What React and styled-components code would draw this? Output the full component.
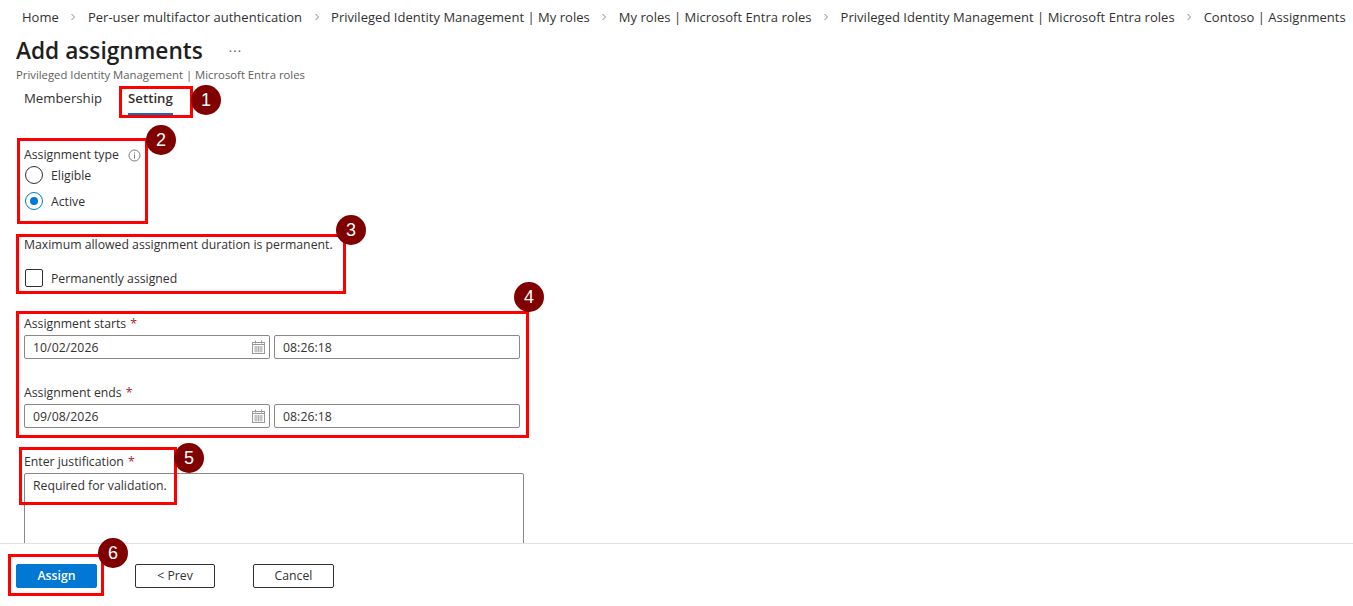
import React from "react";
import styled, { createGlobalStyle } from "styled-components";

const crumbs = [
  "Home",
  "Per-user multifactor authentication",
  "Privileged Identity Management | My roles",
  "My roles | Microsoft Entra roles",
  "Privileged Identity Management | Microsoft Entra roles",
  "Contoso | Assignments",
];

const Global = createGlobalStyle`
  html, body { margin: 0; padding: 0; background: #fff; overflow: hidden; }
  body { font-family: "Open Sans", "Noto Sans", "Liberation Sans", sans-serif; font-size: 12.25px; color: #323130; }
  * { box-sizing: border-box; }
`;

const Page = styled.div`
  width: 1353px;
  height: 606px;
  display: flex;
  flex-direction: column;
`;
const Content = styled.main`
  flex: 1;
  min-height: 0;
  overflow: hidden;
`;
const Crumbs = styled.nav`
  height: 34px;
  padding-left: 22px;
  display: flex;
  align-items: center;
  gap: 10.5px;
  white-space: nowrap;
  font-size: 13px;
  letter-spacing: 0.03px;
`;
const Chevron = styled.svg`
  width: 8px;
  height: 8px;
  flex: none;
  fill: none;
  stroke: #8a8886;
  stroke-width: 1;
`;
const TitleRow = styled.div`
  height: 34px;
  padding-left: 16px;
  display: flex;
  align-items: center;
  gap: 26px;
`;
const Title = styled.h1`
  margin: 0;
  font-size: 22.7px;
  line-height: 32px;
  font-weight: 600;
  color: #201f1e;
`;
const More = styled.span`
  font-size: 13px;
  color: #605e5c;
  letter-spacing: 1px;
  line-height: 1;
`;
const Subtitle = styled.div`
  height: 14px;
  line-height: 14px;
  padding-left: 16px;
  font-size: 11.3px;
  color: #605e5c;
`;
const Tabs = styled.div`
  height: 34px;
  padding-left: 24px;
  display: flex;
  gap: 26px;
  position: relative;
`;
const Tab = styled.div`
  height: 33px;
  padding-top: 7px;
  line-height: 18px;
  font-size: 13.2px;
  font-weight: ${(p) => (p.$active ? 600 : 400)};
  border-bottom: 2px solid ${(p) => (p.$active ? "#0f6cbd" : "transparent")};
`;
const Section = styled.section`
  position: relative;
  padding-left: 24px;
  margin-top: ${(p) => p.$top}px;
`;
const Label = styled.div`
  height: 16px;
  line-height: 16px;
  margin-top: ${(p) => p.$top || 0}px;
  display: flex;
  align-items: center;
  gap: 4px;
  white-space: nowrap;
`;
const Star = styled.span`
  color: #a4262c;
`;
const InfoIcon = styled.svg`
  width: 13px;
  height: 13px;
  margin-left: 5px;
  fill: none;
  stroke: #7a7876;
`;
const Choice = styled.label`
  height: 18px;
  margin: ${(p) => p.$top}px 0 0 1px;
  display: flex;
  align-items: center;
  gap: 8px;
`;
const Radio = styled.span`
  width: 18px;
  height: 18px;
  flex: none;
  border-radius: 50%;
  background: #fff;
  border: 1px solid ${(p) => (p.$on ? "#0078d4" : "#323130")};
  display: flex;
  align-items: center;
  justify-content: center;
  &::after {
    content: "";
    width: 8px;
    height: 8px;
    border-radius: 50%;
    background: ${(p) => (p.$on ? "#0078d4" : "transparent")};
  }
`;
const Check = styled.span`
  width: 18px;
  height: 18px;
  flex: none;
  border-radius: 2px;
  border: 1px solid #323130;
`;
const Fields = styled.div`
  display: flex;
  gap: 4px;
  margin-top: 3px;
`;
const Field = styled.div`
  width: 246px;
  height: 24px;
  padding: 0 4px 0 8px;
  border: 1px solid #8a8886;
  border-radius: 2px;
  display: flex;
  align-items: center;
  justify-content: space-between;
  letter-spacing: 0.05px;
`;
const Calendar = styled.svg`
  width: 13px;
  height: 14px;
  fill: none;
  stroke: #9a9896;
`;
const TextArea = styled.div`
  width: 500px;
  height: 110px;
  margin-top: 3px;
  padding: 4px 8px;
  line-height: 16px;
  border: 1px solid #8a8886;
  border-radius: 2px;
`;
const Footer = styled.footer`
  height: 63px;
  flex: none;
  position: relative;
  border-top: 1px solid #e0e0e0;
  padding: 20px 0 0 16px;
  display: flex;
  align-items: flex-start;
  gap: 38px;
`;
const Button = styled.button`
  width: ${(p) => p.$w}px;
  height: 24px;
  padding: 0 0 2px;
  border-radius: 2px;
  font: inherit;
  font-weight: ${(p) => (p.$primary ? 600 : 500)};
  border: 1px solid ${(p) => (p.$primary ? "#0078d4" : "#323130")};
  background: ${(p) => (p.$primary ? "#0078d4" : "#fff")};
  color: ${(p) => (p.$primary ? "#fff" : "#323130")};
`;
// annotation overlays drawn over the screenshot content
const Frame = styled.div`
  position: absolute;
  left: ${(p) => p.$x}px;
  top: ${(p) => p.$y}px;
  width: ${(p) => p.$w}px;
  height: ${(p) => p.$h}px;
  border: 3px solid #ff0000;
  pointer-events: none;
`;
const Badge = styled.div`
  position: absolute;
  left: ${(p) => p.$x - 15}px;
  top: ${(p) => p.$y - 15}px;
  width: 30px;
  height: 30px;
  border-radius: 50%;
  background: #800000;
  color: #fff;
  font-family: "Liberation Sans", sans-serif;
  font-size: 18px;
  display: flex;
  align-items: center;
  justify-content: center;
`;

function CalendarIcon() {
  return (
    <Calendar viewBox="0 0 13 14">
      <rect x="0.5" y="2.5" width="12" height="11" />
      <path d="M3.5 0.5v3M9.5 0.5v3M0.5 4.5h12" />
      <path d="M2 7h9M2 9h9M2 11h9M4 6v6.5M6.5 6v6.5M9 6v6.5" strokeWidth="0.7" />
    </Calendar>
  );
}

function DateRow({ date }) {
  return (
    <Fields>
      <Field>
        {date}
        <CalendarIcon />
      </Field>
      <Field>08:26:18</Field>
    </Fields>
  );
}

export default function App() {
  return (
    <Page>
      <Global />
      <Content>
        <Crumbs>
          {crumbs.map((c, i) => (
            <React.Fragment key={c}>
              {i > 0 && (
                <Chevron viewBox="0 0 8 8">
                  <path d="M2.5 1l3 3-3 3" />
                </Chevron>
              )}
              <span>{c}</span>
            </React.Fragment>
          ))}
        </Crumbs>
        <TitleRow>
          <Title>Add assignments</Title>
          <More>···</More>
        </TitleRow>
        <Subtitle>Privileged Identity Management | Microsoft Entra roles</Subtitle>
        <Tabs>
          <Tab>Membership</Tab>
          <Tab $active>Setting</Tab>
          <Frame $x={119} $y={4} $w={74} $h={32} />
          <Badge $x={206} $y={18}>1</Badge>
        </Tabs>

        <Section $top={31}>
          <Label>
            Assignment type
            <InfoIcon viewBox="0 0 13 13">
              <circle cx="6.5" cy="6.5" r="5.5" />
              <path d="M6.5 5.5v4M6.5 3.4v1.2" />
            </InfoIcon>
          </Label>
          <Choice $top={3}><Radio />Eligible</Choice>
          <Choice $top={8}><Radio $on />Active</Choice>
          <Frame $x={17} $y={-9} $w={131} $h={86} />
          <Badge $x={161} $y={-7}>2</Badge>
        </Section>

        <Section $top={27}>
          <Label>Maximum allowed assignment duration is permanent.</Label>
          <Choice $top={16}><Check />Permanently assigned</Choice>
          <Frame $x={16} $y={-3} $w={330} $h={60} />
          <Badge $x={351} $y={-7}>3</Badge>
        </Section>

        <Section $top={29}>
          <Label>Assignment starts <Star>*</Star></Label>
          <DateRow date="10/02/2026" />
          <Label $top={26}>Assignment ends <Star>*</Star></Label>
          <DateRow date="09/08/2026" />
          <Frame $x={16} $y={-5} $w={513} $h={127} />
          <Badge $x={529} $y={-19}>4</Badge>
        </Section>

        <Section $top={26}>
          <Label>Enter justification <Star>*</Star></Label>
          <TextArea>Required for validation.</TextArea>
          <Frame $x={19} $y={-7} $w={158} $h={58} />
          <Badge $x={189} $y={4}>5</Badge>
        </Section>
      </Content>
      <Footer>
        <Button $primary $w={81}>Assign</Button>
        <Button $w={80}>&lt; Prev</Button>
        <Button $w={81}>Cancel</Button>
        <Frame $x={8} $y={10} $w={96} $h={42} />
        <Badge $x={113} $y={9}>6</Badge>
      </Footer>
    </Page>
  );
}
